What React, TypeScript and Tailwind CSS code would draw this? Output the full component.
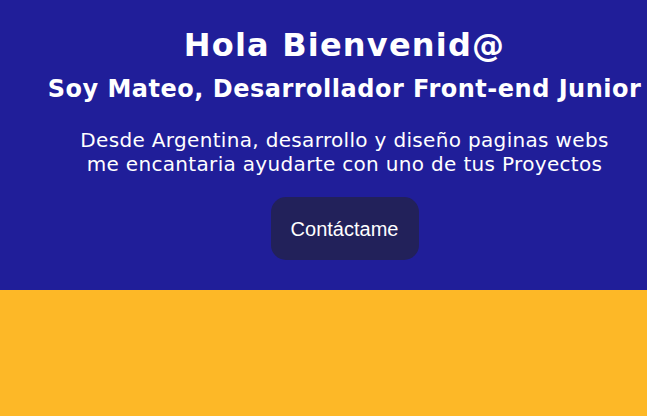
import React from "react";

export default function App() {
  return (
    <div className="w-[647px] h-[416px] overflow-hidden flex flex-col" style={{ fontFamily: '"DejaVu Sans", "Noto Sans", sans-serif' }}>
      <section className="h-[290px] bg-[#201e99] flex flex-col items-center pl-[42px] pt-[29px] text-white">
        <h1 className="text-[32px] leading-[32px] font-bold tracking-[1.2px] whitespace-nowrap">Hola Bienvenid@</h1>
        <h2 className="mt-[16px] text-[24px] leading-[24px] font-bold tracking-[0.5px] whitespace-nowrap">Soy Mateo, Desarrollador Front-end Junior</h2>
        <p className="mt-[27px] text-[20px] leading-[24px] tracking-[0.33px] text-center whitespace-nowrap">
          Desde Argentina, desarrollo y diseño paginas webs
          <br />
          me encantaria ayudarte con uno de tus Proyectos
        </p>
        <button
          className="mt-[21px] w-[148px] h-[63px] rounded-[15px] bg-[#22215a] text-white text-[20px] flex items-center justify-center"
          style={{ fontFamily: '"Liberation Sans", Arial, sans-serif' }}
        >
          Contáctame
        </button>
      </section>
      <section className="flex-1 bg-[#fdb827]" />
    </div>
  );
}
